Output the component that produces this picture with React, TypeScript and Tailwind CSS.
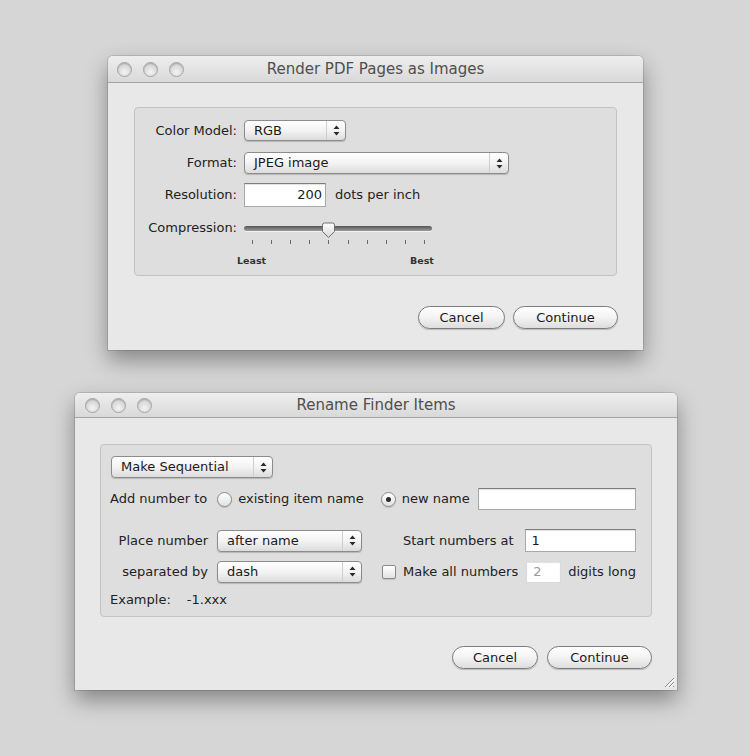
import React from "react";

const font = "font-['DejaVu_Sans',sans-serif]";

function Lights() {
  return (
    <div className="flex items-center gap-[11px]">
      {[0, 1, 2].map((i) => (
        <div
          key={i}
          className="w-[15px] h-[15px] rounded-full border border-[#a4a4a4] bg-[radial-gradient(circle_at_50%_70%,#f4f4f4_0%,#dadada_55%,#c6c6c6_100%)] shadow-[inset_0_1px_1px_rgba(0,0,0,0.18)]"
        />
      ))}
    </div>
  );
}

function TitleBar({ title, h, pl }: { title: string; h: string; pl: string }) {
  return (
    <div
      className={`relative flex items-center ${h} ${pl} bg-gradient-to-b from-[#eeeeee] to-[#d9d9d9] border-b border-[#a3a3a3] rounded-t-[5px]`}
    >
      <Lights />
      <div className="absolute inset-0 flex items-center justify-center text-[15px] text-[#4f4f4f] pointer-events-none">
        {title}
      </div>
    </div>
  );
}

function Arrows() {
  return (
    <svg width="7" height="11" viewBox="0 0 7 11">
      <path d="M3.5 0.5 L6.5 4 H0.5 Z" fill="#2a2a2a" />
      <path d="M3.5 10.5 L6.5 7 H0.5 Z" fill="#2a2a2a" />
    </svg>
  );
}

function Popup({ w, h, text }: { w: string; h: string; text: string }) {
  return (
    <div
      className={`${w} ${h} flex items-stretch rounded-[4px] border border-[#8c8c8c] bg-gradient-to-b from-white via-[#f3f3f3] to-[#dcdcdc] shadow-[0_1px_1px_rgba(0,0,0,0.18)]`}
    >
      <div className="flex-1 flex items-center pl-[9px] text-[13px] text-[#1a1a1a]">{text}</div>
      <div className="w-[19px] flex items-center justify-center border-l border-[#cfcfcf]">
        <Arrows />
      </div>
    </div>
  );
}

function Field({ w, h, text, right, disabled }: { w: string; h: string; text?: string; right?: boolean; disabled?: boolean }) {
  return (
    <div
      className={`${w} ${h} flex items-center bg-white border ${
        disabled ? "border-[#dadada] text-[#9a9a9a]" : "border-[#a8a8a8] border-t-[#7d7d7d] text-[#1a1a1a]"
      } text-[13px] ${right ? "justify-end pr-[3px]" : "pl-[6px]"} shadow-[inset_0_1px_1px_rgba(0,0,0,0.12)]`}
    >
      {text}
    </div>
  );
}

function PillButton({ w, text }: { w: string; text: string }) {
  return (
    <div
      className={`${w} h-[23px] flex items-center justify-center rounded-full border border-[#7b7b7b] bg-gradient-to-b from-white via-[#f3f3f3] to-[#dddddd] shadow-[0_1px_1px_rgba(0,0,0,0.2)] text-[13px] text-[#1a1a1a]`}
    >
      {text}
    </div>
  );
}

function Radio({ checked }: { checked?: boolean }) {
  return (
    <div className="w-[15px] h-[15px] rounded-full border border-[#8a8a8a] bg-gradient-to-b from-white to-[#e2e2e2] flex items-center justify-center shadow-[0_1px_1px_rgba(0,0,0,0.15)]">
      {checked && <div className="w-[5px] h-[5px] rounded-full bg-[#2a2a2a]" />}
    </div>
  );
}

function Slider() {
  const ticks = Array.from({ length: 10 });
  return (
    <div className="relative w-[188px] h-[46px]">
      <div className="absolute left-0 top-[5px] w-[188px] h-[5px] rounded-full bg-gradient-to-b from-[#555555] to-[#9c9c9c] shadow-[0_1px_0_rgba(255,255,255,0.6)]" />
      <div className="absolute left-[8px] top-[19px] w-[173px] flex justify-between">
        {ticks.map((_, i) => (
          <div key={i} className="w-px h-[4px] bg-[#6a6a6a]" />
        ))}
      </div>
      <svg className="absolute left-[77px] top-[1px]" width="15" height="17" viewBox="0 0 15 17">
        <defs>
          <linearGradient id="kg" x1="0" y1="0" x2="0" y2="1">
            <stop offset="0" stopColor="#ffffff" />
            <stop offset="1" stopColor="#d8d8d8" />
          </linearGradient>
        </defs>
        <path d="M1.5 3 Q1.5 1 3.5 1 H11.5 Q13.5 1 13.5 3 V9.5 L7.5 15.5 L1.5 9.5 Z" fill="url(#kg)" stroke="#6f6f6f" strokeWidth="1" />
      </svg>
      <div className="absolute left-[-7px] top-[33px] text-[9.5px] font-bold text-[#333]">Least</div>
      <div className="absolute left-[166px] top-[33px] text-[9.5px] font-bold text-[#333]">Best</div>
    </div>
  );
}

export default function App() {
  return (
    <div className={`${font} w-full h-[756px] bg-[#d6d6d6] pt-[56px] flex flex-col items-start overflow-hidden`}>
      {/* Window 1 */}
      <div className="ml-[108px] w-[535px] h-[294px] flex flex-col bg-[#e8e8e8] rounded-t-[5px] shadow-[0_10px_22px_rgba(0,0,0,0.38),0_0_0_1px_rgba(0,0,0,0.12)]">
        <TitleBar title="Render PDF Pages as Images" h="h-[27px]" pl="pl-[9px]" />
        <div className="ml-[26px] mt-[24px] w-[483px] h-[169px] rounded-[4px] border border-[#c3c3c3] bg-[#dedede] pt-[12px] pl-[6px] text-[13px] text-[#222222]">
          <div className="flex items-center h-[21px]">
            <div className="w-[96px] text-right">Color Model:</div>
            <div className="ml-[7px]">
              <Popup w="w-[102px]" h="h-[21px]" text="RGB" />
            </div>
          </div>
          <div className="flex items-center h-[22px] mt-[11px]">
            <div className="w-[96px] text-right">Format:</div>
            <div className="ml-[7px]">
              <Popup w="w-[265px]" h="h-[22px]" text="JPEG image" />
            </div>
          </div>
          <div className="flex items-center h-[24px] mt-[9px]">
            <div className="w-[96px] text-right">Resolution:</div>
            <div className="ml-[7px]">
              <Field w="w-[82px]" h="h-[24px]" text="200" right />
            </div>
            <div className="ml-[9px]">dots per inch</div>
          </div>
          <div className="flex items-start mt-[14px]">
            <div className="w-[96px] text-right leading-[16px] mt-[-1px]">Compression:</div>
            <div className="ml-[7px]">
              <Slider />
            </div>
          </div>
        </div>
        <div className="mt-[30px] pr-[25px] flex justify-end gap-[8px]">
          <PillButton w="w-[87px]" text="Cancel" />
          <PillButton w="w-[105px]" text="Continue" />
        </div>
      </div>

      {/* Window 2 */}
      <div className="relative mt-[43px] ml-[75px] w-[602px] h-[297px] flex flex-col bg-[#e8e8e8] rounded-t-[5px] shadow-[0_10px_22px_rgba(0,0,0,0.38),0_0_0_1px_rgba(0,0,0,0.12)]">
        <TitleBar title="Rename Finder Items" h="h-[25px]" pl="pl-[10px]" />
        <div className="ml-[25px] mt-[26px] w-[552px] h-[173px] rounded-[4px] border border-[#c3c3c3] bg-[#dedede] pt-[11px] pl-[9px] text-[13px] text-[#222222]">
          <div className="pl-[1px]">
            <Popup w="w-[162px]" h="h-[22px]" text="Make Sequential" />
          </div>
          <div className="flex items-center h-[22px] mt-[10px]">
            <div>Add number to</div>
            <div className="ml-[10px]">
              <Radio />
            </div>
            <div className="ml-[6px]">existing item name</div>
            <div className="ml-[17px]">
              <Radio checked />
            </div>
            <div className="ml-[6px]">new name</div>
            <div className="ml-[8px]">
              <Field w="w-[158px]" h="h-[22px]" />
            </div>
          </div>
          <div className="flex items-center h-[23px] mt-[19px]">
            <div className="w-[98px] text-right">Place number</div>
            <div className="ml-[9px]">
              <Popup w="w-[145px]" h="h-[22px]" text="after name" />
            </div>
            <div className="ml-[41px]">Start numbers at</div>
            <div className="ml-[11px]">
              <Field w="w-[111px]" h="h-[23px]" text="1" />
            </div>
          </div>
          <div className="flex items-center h-[23px] mt-[8px]">
            <div className="w-[98px] text-right">separated by</div>
            <div className="ml-[9px]">
              <Popup w="w-[145px]" h="h-[22px]" text="dash" />
            </div>
            <div className="ml-[20px] w-[14px] h-[14px] rounded-[2px] border border-[#8a8a8a] bg-gradient-to-b from-white to-[#e2e2e2] shadow-[0_1px_1px_rgba(0,0,0,0.12)]" />
            <div className="ml-[7px]">Make all numbers</div>
            <div className="ml-[8px]">
              <Field w="w-[35px]" h="h-[22px]" text="2" disabled />
            </div>
            <div className="ml-[7px]">digits long</div>
          </div>
          <div className="flex items-center h-[18px] mt-[8px]">
            <div>Example:</div>
            <div className="ml-[16px]">-1.xxx</div>
          </div>
        </div>
        <div className="mt-[29px] pr-[25px] flex justify-end gap-[9px]">
          <PillButton w="w-[86px]" text="Cancel" />
          <PillButton w="w-[105px]" text="Continue" />
        </div>
        <svg className="absolute right-[2px] bottom-[2px]" width="12" height="12" viewBox="0 0 12 12">
          <path d="M11 2 L2 11 M11 6 L6 11 M11 10 L10 11" stroke="#8a8a8a" strokeWidth="1" />
          <path d="M11.5 3 L3 11.5 M11.5 7 L7 11.5" stroke="#ffffff" strokeWidth="1" />
        </svg>
      </div>
    </div>
  );
}
